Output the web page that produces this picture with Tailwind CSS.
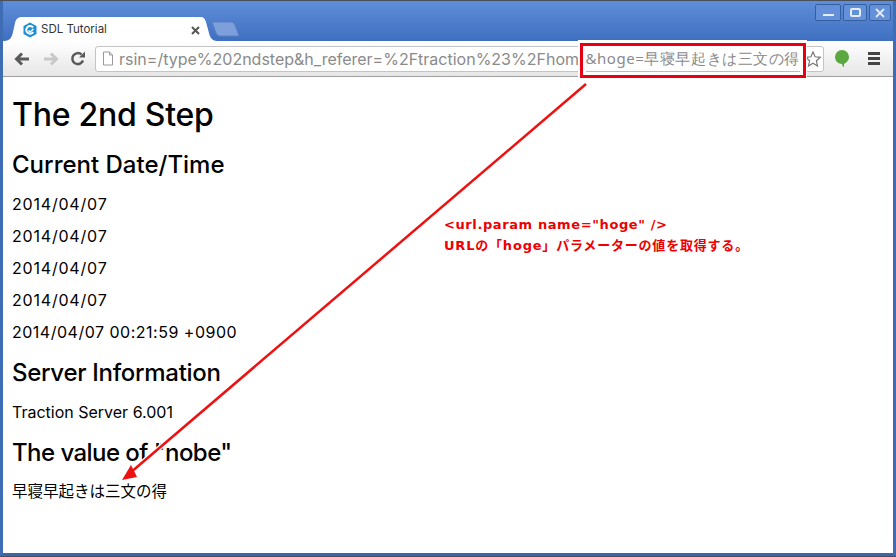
<!DOCTYPE html>
<html lang="ja">
<head>
<meta charset="utf-8">
<title>SDL Tutorial</title>
<script src="https://cdn.jsdelivr.net/npm/@tailwindcss/browser@4"></script>
</head>
<body class="bg-white">
<div class="relative w-[896px] h-[557px] overflow-hidden border-t border-b border-[#4a4f58] bg-[#3f6db5]">
<div class="h-[555px] flex flex-col border-x-[3px] border-b-[3px] border-x-[#3f6db5] border-b-[#3a66ab] bg-white font-['Inter','Noto_Sans_CJK_JP',sans-serif] text-black">

	<!-- Title bar with tabs -->
	<div class="relative h-[40px] shrink-0 bg-gradient-to-b from-[#5f8ed9] to-[#3f6fc0]">
		<svg class="absolute left-0 top-0" width="240" height="40" viewBox="0 0 240 40">
			<path d="M209 21h19c2 0 3 1 4 3l4 11h-19c-2 0-3-1-4-3z" fill="#7d9fdc" stroke="#5a80c4"/>
			<path d="M1 40c6 0 8-4 9-9l2-9c1-4 3-6 7-6h178c4 0 5 2 6 5l3 11c1 5 4 8 8 8z" fill="#fff"/>
		</svg>
		<div class="absolute left-[19px] top-[20px] w-[178px] h-[18px] flex items-center gap-[3px]">
			<svg width="16" height="16" viewBox="0 0 16 16" class="shrink-0">
				<path d="M8 .5 14.500 4v8L8 15.500 1.500 12V4z" fill="#1c8fd8"/>
				<path d="M11 5.500A3.800 3.800 0 1 0 11.200 10" fill="none" stroke="#fff" stroke-width="2"/>
				<path d="M6.500 8.500 8 10l3.500-3" fill="none" stroke="#fff" stroke-width="1.500"/>
			</svg>
			<span class="text-[11.500px] text-[#333]">SDL Tutorial</span>
			<svg width="9" height="9" viewBox="0 0 9 9" class="ml-auto"><path d="M1 1l7 7M8 1 1 8" stroke="#555" stroke-width="2"/></svg>
		</div>

		<!-- Window buttons -->
		<div class="absolute right-[2px] top-[3px] flex gap-[2px]">
			<div class="w-[26px] h-[17px] border border-[#34609f] bg-[#6390d8] rounded-[2px] flex items-center justify-center"><div class="w-[11px] h-[2px] mt-[4px] bg-[#e4ecf9]"></div></div>
			<div class="w-[24px] h-[17px] border border-[#34609f] bg-[#6390d8] rounded-[2px] flex items-center justify-center"><div class="w-[11px] h-[9px] border-2 border-[#e4ecf9] rounded-[2px]"></div></div>
			<div class="w-[22px] h-[17px] border border-[#34609f] bg-[#6390d8] rounded-[2px] flex items-center justify-center">
				<svg width="10" height="10" viewBox="0 0 10 10"><path d="M1 1l8 8M9 1l-8 8" stroke="#e4ecf9" stroke-width="1.800"/></svg>
			</div>
		</div>
	</div>

	<!-- Toolbar -->
	<div class="h-[36px] shrink-0 flex items-center bg-gradient-to-b from-white to-[#e6e6e6] border-b border-[#a0a0a0] pl-[11px]">
		<svg width="16" height="14" viewBox="0 0 16 14"><path d="M15 7H3M8 1.500 2.500 7 8 12.500" fill="none" stroke="#5a5a5a" stroke-width="3"/></svg>
		<svg width="16" height="14" viewBox="0 0 16 14" class="ml-[13px]"><path d="M1 7h12M8 1.500 13.500 7 8 12.500" fill="none" stroke="#c8c8c8" stroke-width="3"/></svg>
		<svg width="16" height="16" viewBox="0 0 16 16" class="ml-[11px]"><path d="M13 9.500A5.500 5.500 0 1 1 11.500 3.500" fill="none" stroke="#5a5a5a" stroke-width="2.500"/><path d="M9 6.500h6v-6z" fill="#5a5a5a"/></svg>
		<div class="ml-[9px] w-[729px] h-[26px] bg-white border border-[#c4c4c4] rounded-[3px] flex items-center pl-[6px] overflow-hidden">
			<svg width="12" height="15" viewBox="0 0 12 15" class="shrink-0"><path d="M1.500 1h6l3 3v10h-9z" fill="#fff" stroke="#999"/><path d="M7.500 1v3h3" fill="none" stroke="#999"/></svg>
			<span class="ml-[5px] text-[16px] text-[#8a8a8a] whitespace-nowrap">rsin=/type%202ndstep&amp;h_referer=%2Ftraction%23%2Fhom</span>
			<svg width="18" height="18" viewBox="0 0 18 18" class="ml-auto mr-[1px] shrink-0"><path d="M9 2l2.100 4.800 5.200.5-3.900 3.500 1.100 5.100L9 13.200l-4.500 2.700 1.100-5.100L1.700 7.300l5.200-.5z" fill="#fff" stroke="#777" stroke-width="1.200"/></svg>
		</div>
		<svg width="16" height="19" viewBox="0 0 16 19" class="ml-[10px]"><path d="M8 1a7 7 0 0 1 7 7c0 3.800-3 6-5 7v3c-1 0-1.500-1-2-3a7 7 0 0 1 0-14z" fill="#5aa83f"/></svg>
		<div class="ml-[18px] w-[12px] flex flex-col gap-[2px]">
			<div class="h-[3px] bg-[#444]"></div><div class="h-[3px] bg-[#444]"></div><div class="h-[3px] bg-[#444]"></div>
		</div>
	</div>

	<!-- Page content -->
	<main class="flex-1 pl-[9px] pt-[18px]">
		<h1 class="text-[32px] leading-[40px] font-medium tracking-[-0.25px]">The 2nd Step</h1>
		<h2 class="mt-[14px] text-[24px] leading-[32px] font-medium">Current Date/Time</h2>
		<div class="mt-[12px] flex flex-col gap-[10px] text-[16px] leading-[22px]">
			<p class="tracking-[0.8px]">2014/04/07</p>
			<p class="tracking-[0.8px]">2014/04/07</p>
			<p class="tracking-[0.8px]">2014/04/07</p>
			<p class="tracking-[0.8px]">2014/04/07</p>
			<p class="tracking-[0.5px]">2014/04/07 00:21:59 +0900</p>
		</div>
		<h2 class="mt-[14px] text-[24px] leading-[32px] font-medium tracking-[-0.3px]">Server Information</h2>
		<p class="mt-[12px] text-[16px] leading-[22px]">Traction Server 6.001</p>
		<h2 class="mt-[14px] text-[24px] leading-[32px] font-medium tracking-[-0.55px]">The value of "nobe"</h2>
		<p class="mt-[12px] text-[15.5px] leading-[22px]">早寝早起きは三文の得</p>
	</main>
</div>

	<!-- Annotations over the screenshot -->
	<div class="absolute left-[578px] top-[39px] w-[229px] h-[39px] bg-white flex items-start justify-center">
		<div class="mt-[3px] w-[226px] h-[35px] border-[3px] border-[#e60012] px-[3px]">
			<span class="block w-full h-[26px] border-b border-[#bbb] text-[15px] tracking-[0.55px] leading-[25px] text-[#8a8a8a] whitespace-nowrap">&amp;hoge=早寝早起きは三文の得</span>
		</div>
	</div>
	<svg class="absolute left-0 top-[-1px]" width="896" height="557" viewBox="0 0 896 557">
		<path d="M586 84 130 473" stroke="#fff" stroke-width="5" fill="none"/>
		<path d="M586 84 130 473" stroke="#ee1111" stroke-width="2.500" fill="none"/>
		<path d="M122 480 131 465 137 477z" fill="#ee1111"/>
	</svg>
	<div class="absolute left-[444px] top-[213px] text-[13px] leading-[21px] font-semibold text-[#ee0000] font-['DejaVu_Sans','Noto_Sans_CJK_JP',sans-serif]">
		<p class="tracking-[0.6px]">&lt;url.param name="hoge" /&gt;</p>
		<p class="tracking-[0.8px]">URLの「hoge」パラメーターの値を取得する。</p>
	</div>
</div>
</body>
</html>
